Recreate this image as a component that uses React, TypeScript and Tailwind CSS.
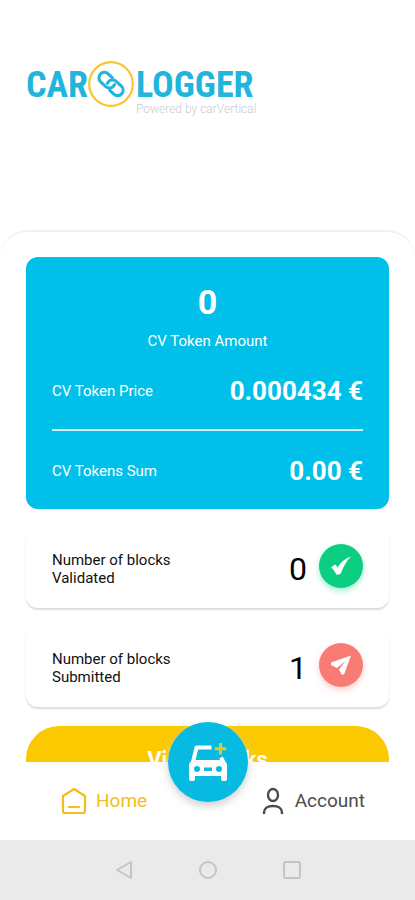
import React from "react";

const Logo = () => (
  <div className="flex items-start text-[#1fb5dc]">
    <span className="font-['Roboto_Condensed','Liberation_Sans_Narrow',Roboto,sans-serif] text-[36px] leading-[48px] font-bold">
      CAR
    </span>
    <svg className="mr-0.5 size-[46px] shrink-0" viewBox="0 0 46 46" fill="none" aria-hidden="true">
      <circle cx="23" cy="23" r="21.8" stroke="#fbc52d" strokeWidth="2.2" />
      <g transform="rotate(43 23 23)" stroke="#1fb5dc" strokeWidth="3.1" strokeLinecap="round">
        <path d="M19.500 17.500h-5.500a5.500 5.500 0 0 0 0 11h7a5.500 5.500 0 0 0 5-7.500" />
        <path d="M26.500 28.500h5.500a5.500 5.500 0 0 0 0-11h-7a5.500 5.500 0 0 0-5 7.500" />
      </g>
    </svg>
    <div className="flex flex-col items-start">
      <span className="font-['Roboto_Condensed','Liberation_Sans_Narrow',Roboto,sans-serif] text-[36px] leading-[48px] font-bold">
        LOGGER
      </span>
      <span className="-mt-1.5 text-[12px] leading-3 font-light text-[#c9ccd0]">Powered by carVertical</span>
    </div>
  </div>
);

type BlockCardProps = {
  label: string;
  count: number;
  badge: string;
  children: React.ReactNode;
};

const BlockCard = ({ label, count, badge, children }: BlockCardProps) => (
  <div className="flex h-20 shrink-0 items-center justify-between rounded-xl bg-white px-[26px] pb-1 shadow-[0_2px_2px_#dcdcdc]">
    <p className="w-32 pt-1.5 text-[15px] leading-[18px] text-[#111]">
      Number of blocks {label}
    </p>
    <div className="flex items-center gap-3">
      <span className="pt-1.5 text-[32px] leading-10 text-black">{count}</span>
      <span className={`flex size-11 items-center justify-center rounded-full ${badge}`}>{children}</span>
    </div>
  </div>
);

const App = () => {
  return (
    <div className="flex h-screen flex-col overflow-hidden bg-white font-[Roboto,sans-serif]">
      <header className="h-[230px] shrink-0 px-[26px] pt-[61px]">
        <Logo />
      </header>

      <main className="flex min-h-0 flex-1 flex-col gap-[19px] overflow-hidden rounded-t-[28px] border-t-2 border-[#f0f0f0] bg-white px-[26px] pt-[25px]">
        <section className="shrink-0 rounded-xl bg-[#00bfe8] px-[26px] pt-6 pb-[18px] text-white">
          <div className="flex flex-col items-center">
            <span className="text-[34px] leading-[42px] font-bold">0</span>
            <span className="mt-2 text-[15px] leading-5">CV Token Amount</span>
          </div>
          <div className="mt-5 flex h-10 items-center justify-between">
            <span className="text-[15px]">CV Token Price</span>
            <span className="text-[26px] font-bold">0.000434 €</span>
          </div>
          <hr className="mt-[18px] border-t-2 border-[#d5f5fc]" />
          <div className="mt-5 flex h-10 items-center justify-between">
            <span className="text-[15px]">CV Tokens Sum</span>
            <span className="text-[26px] font-bold">0.00 €</span>
          </div>
        </section>

        <BlockCard label="Validated" count={0} badge="bg-[#0bce83] shadow-[0_3px_6px_#a5efd0]">
          <svg className="size-6" viewBox="0 0 24 24" fill="#fff" aria-hidden="true">
            <path d="M2 13.500 6 10.500c1.200.8 2 1.800 2.700 3.200C11.500 8.500 15.500 5 22 2.500c-5 5-7.500 10.500-10.500 17.500l-4 .8C6.200 17.800 4.500 15.300 2 13.500Z" />
          </svg>
        </BlockCard>
        <BlockCard label="Submitted" count={1} badge="bg-[#f87c75] shadow-[0_3px_6px_#fbcfcc]">
          <svg className="size-6" viewBox="0 0 24 24" fill="#fff" aria-hidden="true">
            <path d="M22 2.500 2 9.500v2.500l6 3L16.500 8l-6.500 8.500 2.500 5H15L22 2.500Z" />
          </svg>
        </BlockCard>

        <button className="h-[66px] shrink-0 rounded-full bg-[#fbc900] text-[22px] font-bold text-white">
          View Blocks
        </button>
      </main>

      <nav className="relative flex h-[78px] shrink-0 items-center justify-between bg-white px-[50px]">
        <a href="#home" className="flex items-center gap-2 pl-[10px] text-[19px] text-[#f5bd1a]">
          <svg className="size-7" viewBox="0 0 28 28" fill="none" stroke="currentColor" strokeWidth="2.200" strokeLinejoin="round" strokeLinecap="round" aria-hidden="true">
            <path d="M3 9 14 2l11 7v15a2 2 0 0 1-2 2H5a2 2 0 0 1-2-2Z" />
            <path d="M9 20h10" />
          </svg>
          Home
        </a>
        <a href="#account" className="flex items-center gap-2 text-[19px] text-[#4c4c4c]">
          <svg className="size-7" viewBox="0 0 28 28" fill="none" stroke="currentColor" strokeWidth="2.400" aria-hidden="true">
            <ellipse cx="14" cy="8" rx="5" ry="6" />
            <path d="M5 27v-1.500c0-4 3.500-6.500 9-6.500s9 2.500 9 6.500V27" />
          </svg>
          Account
        </a>
        <button
          aria-label="Add car"
          className="absolute -top-10 left-1/2 flex size-20 -translate-x-1/2 items-center justify-center rounded-full bg-[#06bae2] shadow-[0_4px_8px_#d0d0d0]"
        >
          <svg className="size-11" viewBox="0 0 44 44" fill="none" aria-hidden="true">
            <path d="M7 22 10.500 7.500h15" stroke="#fff" strokeWidth="4" strokeLinejoin="round" />
            <path d="m35 17.500 3 6" stroke="#fff" strokeWidth="4" />
            <path
              fill="#fff"
              fillRule="evenodd"
              d="M6 20h32l3 4v15a2 2 0 0 1-2 2h-2a2 2 0 0 1-2-2v-3H9v3a2 2 0 0 1-2 2H5a2 2 0 0 1-2-2V24ZM11 26a3 3 0 1 0 0 6 3 3 0 0 0 0-6ZM33 26a3 3 0 1 0 0 6 3 3 0 0 0 0-6ZM18 27.500v3.500h8v-3.500Z"
            />
            <path d="M34.500 3v11.500M28.800 8.700h11.500" stroke="#e5c52b" strokeWidth="3" />
          </svg>
        </button>
      </nav>

      <footer className="flex h-[60px] shrink-0 items-center justify-center gap-16 bg-[#eaeaea] text-[#c4c4c4]">
        <button aria-label="Back">
          <svg className="size-5" viewBox="0 0 20 20" fill="none" stroke="currentColor" strokeWidth="2" strokeLinejoin="round">
            <path d="M17 2v16L3 10Z" />
          </svg>
        </button>
        <button aria-label="Home screen">
          <svg className="size-5" viewBox="0 0 20 20" fill="none" stroke="currentColor" strokeWidth="2">
            <circle cx="10" cy="10" r="8" />
          </svg>
        </button>
        <button aria-label="Recent apps">
          <svg className="size-5" viewBox="0 0 20 20" fill="none" stroke="currentColor" strokeWidth="2">
            <rect x="2" y="2" width="16" height="16" rx="2" />
          </svg>
        </button>
      </footer>
    </div>
  );
};

export default App;
